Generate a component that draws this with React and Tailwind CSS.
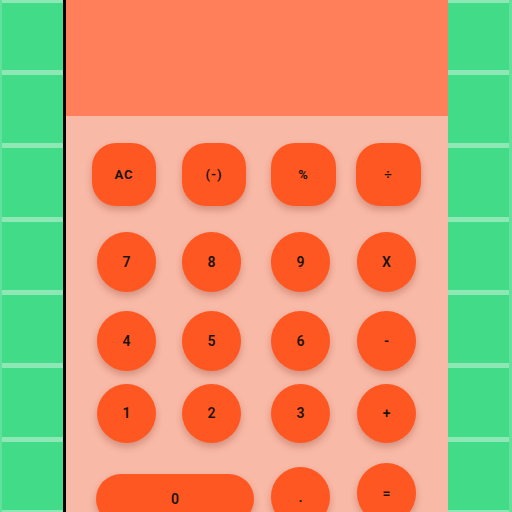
import React from "react";

function Tiles({ side }) {
  const segs = [
    ["l", 3], ["g", 67], ["l", 5], ["g", 68], ["l", 5], ["g", 69], ["l", 5], ["g", 68],
    ["l", 5], ["g", 68], ["l", 5], ["g", 69], ["l", 5], ["g", 68], ["l", 5],
  ];
  return (
    <div
      className={
        "flex flex-col shrink-0 h-[512px] overflow-hidden bg-[#42db87] " +
        (side === "left" ? "w-[63px] border-l-[2px] border-[#62e19c]" : "w-[64px] border-r-[3px] border-[#62e19c]")
      }
    >
      {segs.map(([t, h], i) => (
        <div
          key={i}
          className={t === "l" ? "shrink-0 bg-[#8de8b5]" : "shrink-0 bg-[#42db87]"}
          style={{ height: h }}
        />
      ))}
    </div>
  );
}

function Btn({ label, className, small }) {
  return (
    <div
      className={
        "shrink-0 flex items-center justify-center bg-[#ff5722] text-[#1c1410] shadow-[0_4px_7px_rgba(120,40,20,0.28)] " +
        (small ? "text-[13px] font-bold tracking-[1px] " : "text-[14px] font-semibold ") +
        className
      }
    >
      {label}
    </div>
  );
}

export default function App() {
  return (
    <div
      className="flex h-[512px] w-[512px] overflow-hidden bg-[#42db87]"
      style={{ fontFamily: "Roboto, 'Liberation Sans', sans-serif" }}
    >
      <Tiles side="left" />
      <div className="w-[3px] h-[512px] bg-black shrink-0" />
      <div className="flex flex-col w-[382px] h-[512px] shrink-0 bg-[#f8b9a6]">
        <div className="h-[116px] shrink-0 bg-[#ff7f5b]" />
        <div className="flex pl-[26px] mt-[27px]">
          <Btn small label="AC" className="w-[64px] h-[63px] rounded-[24px]" />
          <Btn small label="(-)" className="ml-[26px] w-[64px] h-[63px] rounded-[24px]" />
          <Btn small label="%" className="ml-[25px] w-[65px] h-[63px] rounded-[24px]" />
          <Btn small label="÷" className="ml-[20px] w-[65px] h-[63px] rounded-[24px]" />
        </div>
        <div className="flex pl-[31px] mt-[26px]">
          <Btn label="7" className="w-[59px] h-[60px] rounded-full" />
          <Btn label="8" className="ml-[26px] w-[59px] h-[60px] rounded-full" />
          <Btn label="9" className="ml-[30px] w-[59px] h-[60px] rounded-full" />
          <Btn label="X" className="ml-[27px] w-[59px] h-[60px] rounded-full" />
        </div>
        <div className="flex pl-[31px] mt-[19px]">
          <Btn label="4" className="w-[59px] h-[60px] rounded-full" />
          <Btn label="5" className="ml-[26px] w-[59px] h-[60px] rounded-full" />
          <Btn label="6" className="ml-[30px] w-[59px] h-[60px] rounded-full" />
          <Btn label="-" className="ml-[27px] w-[59px] h-[60px] rounded-full" />
        </div>
        <div className="flex pl-[31px] mt-[13px]">
          <Btn label="1" className="w-[59px] h-[59px] rounded-full" />
          <Btn label="2" className="ml-[26px] w-[59px] h-[59px] rounded-full" />
          <Btn label="3" className="ml-[30px] w-[59px] h-[59px] rounded-full" />
          <Btn label="+" className="ml-[27px] w-[59px] h-[59px] rounded-full" />
        </div>
        <div className="flex items-start pl-[30px] mt-[20px]">
          <Btn label="0" className="mt-[11px] w-[158px] h-[50px] rounded-[26px]" />
          <Btn label="." className="ml-[17px] mt-[4px] w-[59px] h-[60px] rounded-full" />
          <Btn label="=" className="ml-[27px] w-[59px] h-[60px] rounded-full" />
        </div>
      </div>
      <Tiles side="right" />
    </div>
  );
}
